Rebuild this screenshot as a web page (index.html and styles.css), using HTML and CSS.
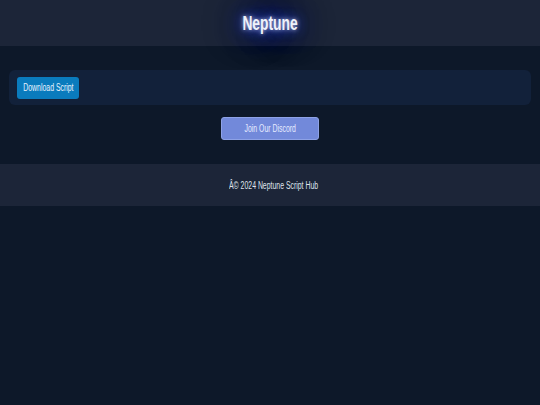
FILE: index.html
```html
<!DOCTYPE html>
<html>
<head>
<meta charset="utf-8">
<link rel="stylesheet" href="styles.css">
</head>
<body>
<header class="header">
  <h1 class="title"><span class="sq">Neptune</span></h1>
</header>
<main class="main">
  <section class="card">
    <a class="btn-download" href="#"><span class="sq">Download Script</span></a>
  </section>
  <div class="discord-row">
    <a class="btn-discord" href="#"><span class="sq">Join Our Discord</span></a>
  </div>
</main>
<footer class="footer">
  <p class="copy"><span class="sq">Â© 2024 Neptune Script Hub</span></p>
</footer>
</body>
</html>
```
FILE: styles.css
```css
html, body {
  margin: 0;
  padding: 0;
}
body {
  background: #0d1829;
  font-family: "Liberation Sans", Arial, sans-serif;
  color: #fff;
  height: 405px;
  overflow: hidden;
}
.sq {
  display: inline-block;
  transform: scaleX(0.69);
  transform-origin: center;
  white-space: nowrap;
}
.header {
  height: 46px;
  background: #1c2538;
  display: flex;
  align-items: center;
  justify-content: center;
  position: relative;
  z-index: 1;
}
.title {
  margin: 0;
  font-size: 20px;
  font-weight: bold;
  color: #eef1fa;
  text-shadow: 0 0 5px rgba(230, 236, 255, 0.75), 0 0 14px rgba(60, 90, 255, 0.8), 0 0 30px rgba(20, 50, 220, 0.75), 0 0 50px rgba(10, 30, 160, 0.7);
}
.main {
  padding: 24px 9px 0;
}
.card {
  background: #12213a;
  border-radius: 6px;
  height: 35px;
  display: flex;
  align-items: center;
  padding: 0 8px;
}
.btn-download {
  display: flex;
  align-items: center;
  justify-content: center;
  width: 62px;
  height: 22px;
  background: #0a7bbd;
  border-radius: 3px;
  color: #e8f4ff;
  font-size: 10px;
  text-decoration: none;
}
.discord-row {
  display: flex;
  justify-content: center;
  padding-top: 12px;
}
.btn-discord {
  display: flex;
  align-items: center;
  justify-content: center;
  width: 96px;
  height: 21px;
  background: #7289da;
  border: 1px solid #8ea2e6;
  border-radius: 3px;
  color: #e6ebff;
  font-size: 10px;
  text-decoration: none;
}
.footer {
  margin-top: 24px;
  height: 42px;
  background: #1c2538;
  display: flex;
  align-items: center;
  justify-content: center;
  padding-left: 7px;
}
.copy {
  margin: 0;
  font-size: 10px;
  color: #dfe3ec;
}
```
